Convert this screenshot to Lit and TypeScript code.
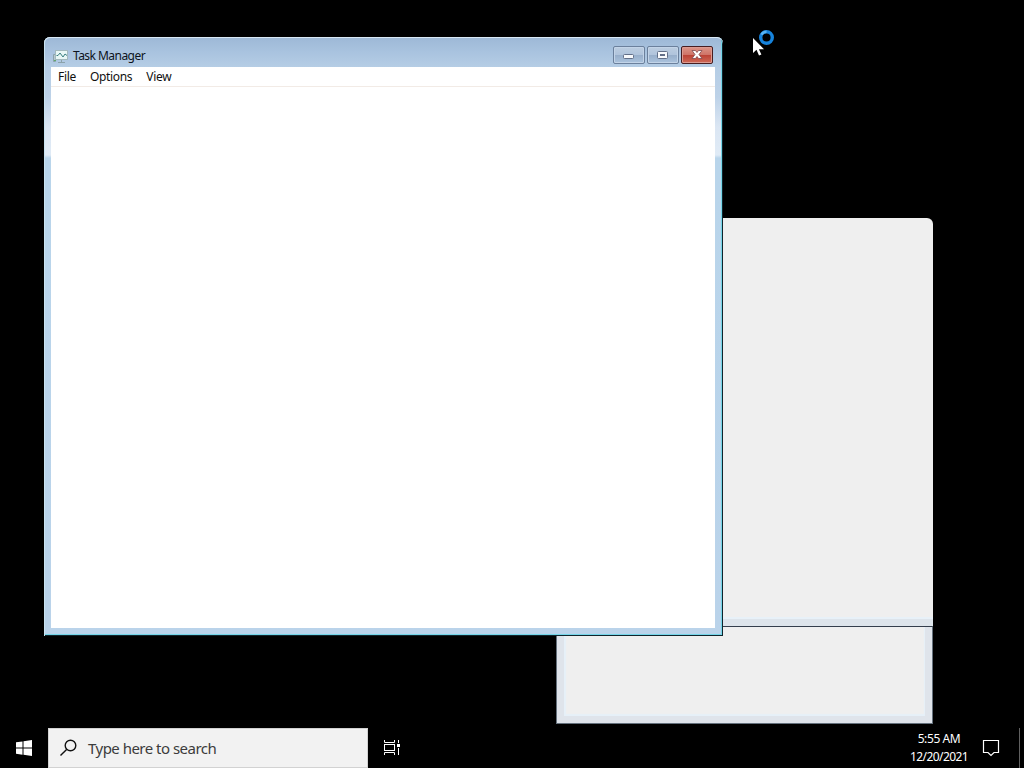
import { LitElement, html, css } from 'lit';
import { customElement, property, state } from 'lit/decorators.js';

@customElement('task-manager')
export class TaskManager extends LitElement {
  @property({ type: String }) name = 'Task Manager';

  @state() menus: string[] = ['File', 'Options', 'View'];

  static styles = css`
    :host {
      display: flex;
      flex-direction: column;
      box-sizing: border-box;
      padding: 1px 8px 8px 7px;
      border-radius: 6px 6px 0 0;
      background: linear-gradient(#9db8d6 0, #a9c3df 15px, #b5cde5 30px, #bdd2e8 60px, #dbe6f3 90px, #e0ebf6 118px, #b9d5eb 121px, #bad3ea 100%);
      box-shadow:
        inset 0 1px 0 #d9e9f5,
        inset 1px 0 0 #c9e4f1,
        inset -1px -1px 0 #10242c,
        inset -2px -2px 0 #74d5e8;
      font-family: 'Noto Sans', 'Open Sans', sans-serif;
      font-size: 12px;
      color: #101010;
    }
    .title {
      display: flex;
      height: 29px;
      box-sizing: border-box;
      padding: 8px 2px 0 2px;
    }
    .title .icon {
      margin: 2px 5px 0 -1px;
      flex: none;
    }
    .name {
      flex: 1;
      line-height: 20px;
      letter-spacing: -0.54px;
      color: #0c1320;
    }
    .buttons {
      display: flex;
      gap: 2px;
    }
    .button {
      display: flex;
      width: 32px;
      height: 18px;
      box-sizing: border-box;
      border: 1px solid #6b809c;
      border-radius: 2px;
      box-shadow: inset 0 0 0 1px #c3d4e8;
      background: linear-gradient(#bccde0 0, #b0c4dc 48%, #98afcb 52%, #abc3dd 100%);
    }
    .close {
      border-color: #471d20;
      box-shadow: inset 0 0 0 1px #dc9b91;
      background: linear-gradient(#dc9588 0, #cf7468 48%, #bc4336 52%, #cf6a58 100%);
    }
    .client {
      flex: 1;
      background: #fff;
    }
    .menu {
      display: flex;
      gap: 14px;
      height: 19px;
      padding-left: 7px;
      border-bottom: 1px solid #f2ebe6;
      line-height: 20px;
      letter-spacing: -0.32px;
    }
  `;

  render() {
    return html`
      <div class="title">
        <svg class="icon" width="16" height="16" viewBox="0 0 16 16">
          <path d="M1.500 13.500V6.500h2v7z" fill="#b8c8cc" stroke="#8ba2ab" />
          <path d="M6 14.500h7M9.500 11v3" stroke="#8ba2ab" />
          <rect x="3.500" y="2.500" width="12" height="9" fill="#e8f7f5" stroke="#a3b9bd" />
          <path d="M4.500 7.500H6l2-2.500 3 4 2-3 2 1.500" fill="none" stroke="#397f80" />
          <path d="M2 12.500h2" stroke="#62a86c" />
        </svg>
        <div class="name">${this.name}</div>
        <div class="buttons">
          <div class="button">
            <svg width="30" height="16">
              <rect x="9.500" y="7.500" width="10" height="4" rx="1" fill="#f7f9fc" stroke="#626f88" />
            </svg>
          </div>
          <div class="button">
            <svg width="30" height="16">
              <rect x="9.500" y="4.500" width="10" height="7" rx="1" fill="#f7f9fc" stroke="#626f88" />
              <rect x="12.500" y="7.500" width="4" height="1" fill="#b2c2d6" stroke="#626f88" />
            </svg>
          </div>
          <div class="button close">
            <svg width="30" height="16">
              <path d="M10 3.500h3.500L15 5.500l1.500-2H20L17 7.500l3 4h-3.500L15 9.500l-1.500 2H10l3-4z" fill="#fff" stroke="#7d474d" stroke-width="0.800" />
            </svg>
          </div>
        </div>
      </div>
      <div class="client">
        <div class="menu">${this.menus.map(value => html`<span>${value}</span>`)}</div>
      </div>
    `;
  }
}

@customElement('task-bar')
export class TaskBar extends LitElement {
  @property({ type: String }) time = '5:55 AM';

  @property({ type: String }) date = '12/20/2021';

  static styles = css`
    :host {
      display: flex;
      height: 40px;
      background: #000;
      font-family: 'Noto Sans', 'Open Sans', sans-serif;
    }
    svg {
      display: block;
      flex: none;
    }
    .search {
      display: flex;
      width: 320px;
      box-sizing: border-box;
      border: 1px solid #d2d2d2;
      background: #f2f2f2;
      color: #3c3c3c;
      font-size: 15px;
      line-height: 39px;
      letter-spacing: -0.52px;
    }
    .space {
      flex: 1;
    }
    .clock {
      width: 62px;
      padding-top: 2px;
      color: #fff;
      font-size: 12px;
      line-height: 18px;
      letter-spacing: -0.57px;
      text-align: center;
      white-space: nowrap;
    }
    .time {
      letter-spacing: -0.4px;
    }
    .peek {
      width: 4px;
      border-left: 1px solid #606060;
    }
  `;

  render() {
    return html`
      <svg width="48" height="40">
        <path d="M16 14.300l6.500-.9V19.500H16zM23.500 13.200L32 12v7.500h-8.500zM16 20.500h6.500v6.200l-6.500-.9zM23.500 20.500H32V28l-8.500-1.200z" fill="#fff" />
      </svg>
      <div class="search">
        <svg width="39" height="38">
          <circle cx="21.500" cy="16.500" r="5.300" fill="none" stroke="#111" stroke-width="1.400" />
          <path d="M17.600 20.400L11.500 26.500" stroke="#111" stroke-width="1.400" />
        </svg>
        <span>Type here to search</span>
      </div>
      <svg width="48" height="40">
        <path d="M16.500 12v2.500h10V12M16.500 27v-2.500h10V27M30.500 12v3M30.500 20v7" fill="none" stroke="#fff" />
        <rect x="16.500" y="16.500" width="10" height="6" fill="none" stroke="#fff" />
        <rect x="29" y="16" width="3" height="3" fill="#fff" />
      </svg>
      <div class="space"></div>
      <div class="clock">
        <div class="time">${this.time}</div>
        <div>${this.date}</div>
      </div>
      <svg width="49" height="40">
        <path d="M13.500 12.500h15v12h-4.500l-3 3-3-3h-4.500z" fill="none" stroke="#fff" stroke-width="1.200" />
      </svg>
      <div class="peek"></div>
    `;
  }
}

@customElement('app-root')
export class AppRoot extends LitElement {
  static styles = css`
    :host {
      display: flex;
      flex-direction: column;
      position: relative;
      width: 1024px;
      height: 768px;
      overflow: hidden;
      background: #000;
    }
    .desktop {
      position: relative;
      flex: 1;
    }
    .panel {
      position: absolute;
      box-sizing: border-box;
      background: #efefef;
    }
    .back {
      left: 557px;
      top: 218px;
      width: 376px;
      height: 408px;
      border-bottom: 7px solid #dde4eb;
      border-radius: 6px 6px 0 0;
      box-shadow: inset 0 -2px 0 #e8f1f8;
    }
    .front {
      left: 556px;
      top: 626px;
      width: 377px;
      height: 98px;
      border: 1px solid #65717d;
      border-top-color: #343e4c;
      box-shadow:
        inset 7px -7px 0 #dfe4eb,
        inset -7px 0 0 #dfe4eb,
        inset 9px -9px 1px #e6f0f8,
        inset -8px 0 1px #e6f0f8;
    }
    task-manager {
      position: absolute;
      left: 44px;
      top: 37px;
      width: 679px;
      height: 599px;
    }
    .pointer {
      position: absolute;
      left: 752px;
      top: 29px;
    }
  `;

  render() {
    return html`
      <div class="desktop">
        <div class="panel back"></div>
        <div class="panel front"></div>
        <task-manager></task-manager>
        <svg class="pointer" width="24" height="28">
          <path d="M1 9v15l3.500-3.200L7 26.500l2.400-1-2.500-5.300H12z" fill="#fff" />
          <circle cx="14.500" cy="8.500" r="5.800" fill="none" stroke="#1683dc" stroke-width="3.400" />
          <path d="M9.500 5.600a5.800 5.800 0 0 1 5-2.900" fill="none" stroke="#58b4f5" stroke-width="2.500" />
        </svg>
      </div>
      <task-bar></task-bar>
    `;
  }
}
